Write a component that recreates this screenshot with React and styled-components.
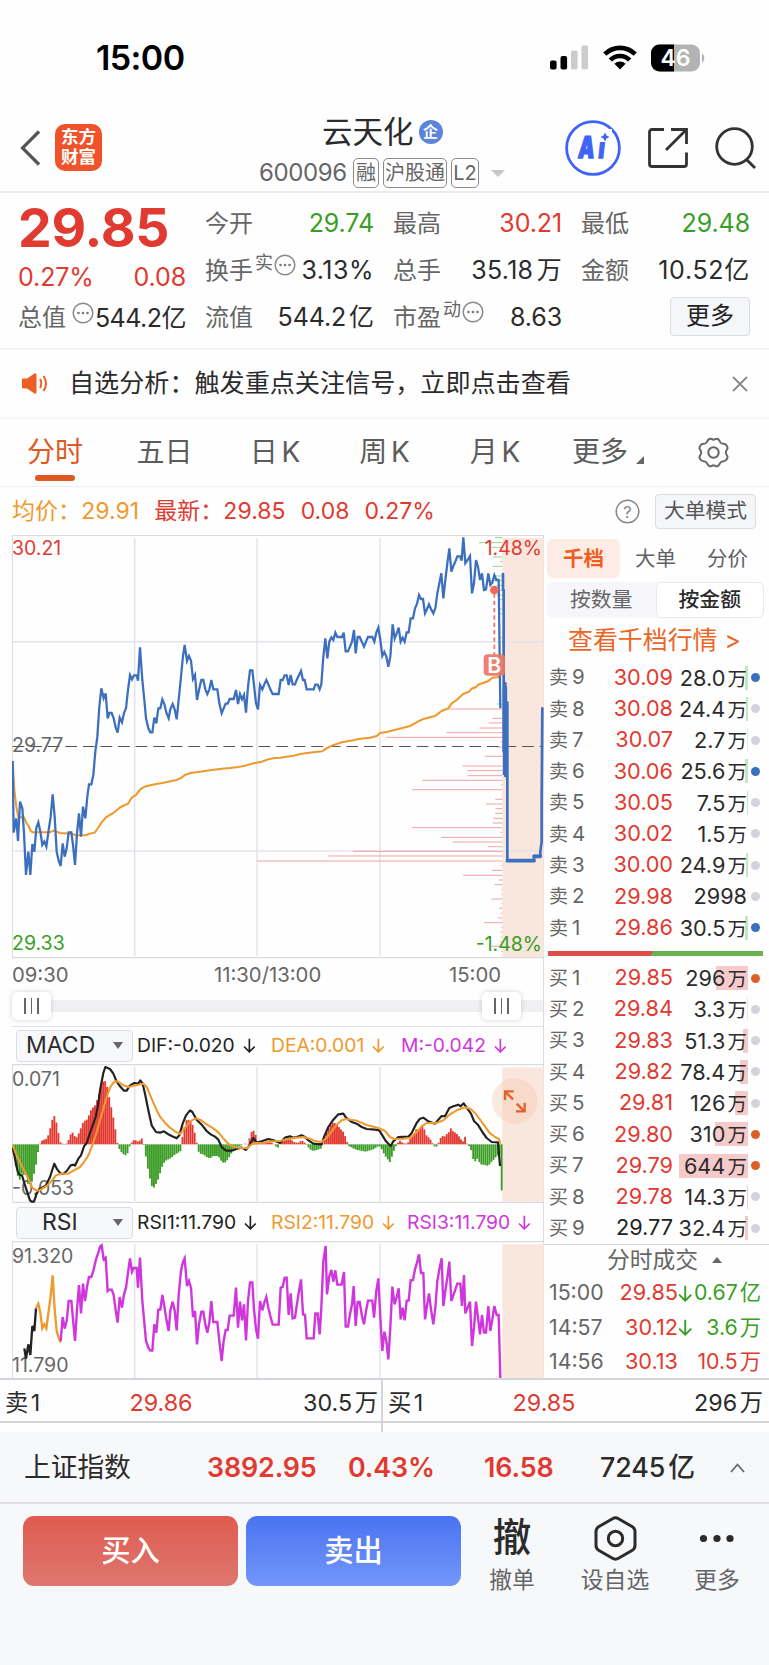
import React from 'react';
import styled, { createGlobalStyle } from 'styled-components';

/* Stock detail page: quote summary, intraday chart, order book and trade bar.
*/

const RED = '#e03a31';
const GREEN = '#3a9e26';
const ORANGE = '#ee9a2e';
const PURPLE = '#cf37dc';
const BLUE = '#3c6fbe';
const BLACK = '#222222';
const GREY = '#666666';

const GlobalStyle = createGlobalStyle`
  * {
    box-sizing: border-box;
  }
  body {
    margin: 0;
    background: #fefefe;
    color: #2b2b2b;
    font-family: Inter, 'Noto Sans CJK SC', sans-serif;
    font-size: 24px;
    line-height: 1;
    white-space: nowrap;
  }
  svg {
    display: block;
    flex: none;
  }
`;

const Page = styled.div`
  width: 769px;
  height: 1665px;
  overflow: hidden;
  display: flex;
  flex-direction: column;
  background: #fefefe;
`;

/* status bar + header */

const StatusBar = styled.div`
  height: 104px;
  padding: 11px 64px 0 96px;
  display: flex;
  align-items: center;
  flex: none;
`;

const Clock = styled.div`
  flex: 1;
  color: #000;
  padding-top: 1px;
  font-size: 34px;
  font-weight: 600;
  letter-spacing: -0.6px;
`;

const StatusIcons = styled.div`
  display: flex;
  align-items: center;
  gap: 14px;
`;

const Header = styled.div`
  height: 89px;
  flex: none;
  padding: 0 13px 0 20px;
  display: grid;
  grid-template-columns: 235px 1fr 202px;
  border-bottom: 2px solid #ebebeb;
`;

const HeaderSide = styled.div`
  display: flex;
  align-items: center;
  gap: ${(p) => p.$gap}px;
  justify-content: ${(p) => (p.$end ? 'flex-end' : 'flex-start')};
`;

const Logo = styled.div`
  width: 47px;
  height: 47px;
  border-radius: 10px;
  background: #f0522a;
  color: #fff;
  font-size: 17.5px;
  font-weight: 700;
  line-height: 20px;
  text-align: center;
  padding-top: 3px;
`;

const HeaderCenter = styled.div`
  padding-top: 11px;
`;

const Title = styled.div`
  height: 34px;
  display: flex;
  align-items: center;
  gap: 5px;
  padding-left: 67px;
  font-size: 30.5px;
`;

const Badge = styled.span`
  width: 24px;
  height: 24px;
  border-radius: 50%;
  background: #5b84dd;
  color: #fff;
  font-size: 15px;
  font-weight: 700;
  line-height: 23px;
  text-align: center;
`;

const CodeRow = styled.div`
  display: flex;
  align-items: center;
  gap: 4px;
  margin-top: 9px;
  padding-left: 4px;
  color: ${GREY};
`;

const Code = styled.span`
  width: 90px;
  font-size: 24px;
  letter-spacing: -0.4px;
`;

const Tag = styled.span`
  height: 30px;
  width: ${(p) => p.$w}px;
  border: 1.5px solid #8a8a8a;
  border-radius: 5px;
  line-height: 28px;
  text-align: center;
  font-size: 20px;
`;

const Caret = styled.span`
  width: 0;
  height: 0;
  margin-left: ${(p) => p.$gap || 0}px;
  border-left: ${(p) => p.$s || 7}px solid transparent;
  border-right: ${(p) => p.$s || 7}px solid transparent;
  ${(p) => (p.$up ? 'border-bottom' : 'border-top')}: ${(p) => p.$h || 7}px solid ${(p) => p.$c || '#c8c8c8'};
`;

/* quote summary */

const Summary = styled.div`
  height: 157px;
  flex: none;
  display: flex;
  gap: 19px;
  padding: 7px 19px 0 18px;
  border-bottom: 2px solid #f3f3f3;
`;

const PriceColumn = styled.div`
  width: 168px;
`;

const BigPrice = styled.div`
  height: 56px;
  line-height: 56px;
  font-size: 53.5px;
  font-weight: 650;
  letter-spacing: -0.2px;
  color: ${RED};
`;

const Cell = styled.div`
  height: ${(p) => p.$h || 47}px;
  display: flex;
  align-items: center;
  justify-content: space-between;
  color: ${(p) => p.$c || '#2b2b2b'};
  font-size: 25px;
  letter-spacing: ${(p) => p.$ls || -0.1}px;
  word-spacing: -4px;
`;

const CellLabel = styled.span`
  display: flex;
  align-items: center;
  color: ${GREY};
  font-size: 24px;
  letter-spacing: 0;
`;

const Sup = styled.span`
  font-size: 18px;
  margin: -15px 1px 0 2px;
`;

const InfoDot = styled.svg`
  margin-top: -11px;
  margin-left: ${(p) => p.$gap || 0}px;
`;

const StatGrid = styled.div`
  flex: 1;
  display: grid;
  grid-template-columns: repeat(3, 169px);
  grid-auto-rows: 47px;
  column-gap: 19px;
`;

const MoreButton = styled.button`
  width: 80px;
  height: 39px;
  margin: -3px 0 0 auto;
  padding: 0;
  border: 1.5px solid #dcdde4;
  border-radius: 4px;
  background: #f5f6fa;
  color: #222;
  font: inherit;
  font-size: 24px;
`;

/* notice */

const Notice = styled.div`
  height: 69px;
  flex: none;
  display: flex;
  align-items: center;
  padding: 0 21px 0 22px;
  border-bottom: 2px solid #f6f6f6;
`;

const NoticeText = styled.div`
  flex: 1;
  margin-left: 20px;
  font-size: 25.1px;
`;

/* tabs */

const Tabs = styled.div`
  height: 68px;
  flex: none;
  display: grid;
  grid-template-columns: 110px 109px 112px 107px 114px 112px 98px;
  border-bottom: 1.5px solid #f0f0f0;
`;

const Tab = styled.div`
  display: flex;
  flex-direction: column;
  align-items: center;
  padding-top: 18px;
  font-size: 28px;
  word-spacing: -4px;
  line-height: 30px;
  color: ${(p) => (p.$active ? '#dd5a22' : '#5c5c5c')};

  &::after {
    content: '';
    width: 40px;
    height: 6px;
    margin-top: 8px;
    border-radius: 3px;
    background: ${(p) => (p.$active ? '#dd5a22' : 'transparent')};
  }
`;

const TabLabel = styled.span`
  display: flex;
  align-items: flex-end;
  gap: 8px;
`;

const Legend = styled.div`
  height: 48px;
  flex: none;
  display: flex;
  align-items: center;
  gap: 15px;
  padding: 0 13px 0 12px;
  font-size: 23px;
  letter-spacing: 0.05px;
  color: ${RED};
`;

const LegendItem = styled.span`
  flex: ${(p) => (p.$grow ? 1 : 'none')};
  color: ${(p) => p.$c || RED};
`;

const ModeButton = styled.button`
  width: 101px;
  height: 35px;
  padding: 0;
  border: 1.5px solid #dcdde4;
  border-radius: 4px;
  background: #f5f6fa;
  color: #555;
  font: inherit;
  font-size: 20.8px;
`;

/* charts */

const Main = styled.div`
  height: 843px;
  flex: none;
  display: flex;
  overflow: hidden;
`;

const Charts = styled.div`
  width: 544px;
  flex: none;
  padding-left: 12px;
  border-right: 1px solid #dcdce3;
`;

const TimeAxis = styled.div`
  height: 30px;
  padding: 2px 42px 0 0;
  display: grid;
  grid-template-columns: 202px 1fr auto;
  align-items: center;
  font-size: 20.3px;
  color: ${GREY};
`;

const Slider = styled.div`
  height: 38px;
  margin-bottom: -1px;
  padding: 0 22px 3px 0;
  display: flex;
  align-items: center;
  justify-content: space-between;
  background: linear-gradient(#f0f0f3, #f0f0f3) no-repeat 20px 11px / 511px 12px;
  border-bottom: 1.5px solid #e0e0e6;
`;

const Handle = styled.div`
  width: 39px;
  height: 28px;
  border-radius: 5px;
  background: #fff;
  box-shadow: 0 0 5px rgba(0, 0, 0, 0.18);
  display: flex;
  align-items: center;
  justify-content: center;
  gap: 4.4px;

  & > i {
    width: 1.8px;
    height: 16px;
    background: #666;
  }
`;

const IndicatorRow = styled.div`
  height: 38px;
  display: flex;
  align-items: center;
  padding: 1px 0 0 4px;
  font-size: 19.3px;
`;

const IndicatorSelect = styled.div`
  width: 117px;
  height: 32px;
  flex: none;
  margin-right: 4px;
  border: 1.5px solid #dcdde4;
  border-radius: 4px;
  background: #f7f8fb;
  display: flex;
  align-items: center;
  justify-content: space-between;
  padding: 0 9px 0 ${(p) => p.$pad}px;
  font-size: 23px;
`;

const IndicatorValue = styled.span`
  display: flex;
  align-items: center;
  gap: 8px;
  width: ${(p) => p.$w}px;
  color: ${(p) => p.$c};
`;

/* order book */

const Book = styled.div`
  flex: 1;
`;

const BookTabs = styled.div`
  display: grid;
  grid-template-columns: 73px 70px 74px;
  height: 43px;
  padding: 4px 0 0 3px;
`;

const BookTab = styled.div`
  height: 39px;
  border-radius: 6px;
  line-height: 39px;
  text-align: ${(p) => (p.$active ? 'center' : 'right')};
  padding-right: ${(p) => p.$pad || 0}px;
  font-size: 20.5px;
  font-weight: ${(p) => (p.$active ? 700 : 400)};
  color: ${(p) => (p.$active ? '#ee5d22' : '#606060')};
  background: ${(p) => (p.$active ? '#fdece3' : 'transparent')};
`;

const Segment = styled.div`
  display: flex;
  height: 36px;
  margin: 4px 5px 0 3px;
  border-radius: 6px;
  background: #f6f6fa;
`;

const SegmentItem = styled.div`
  flex: 1;
  border-radius: 6px;
  text-align: center;
  line-height: 34px;
  font-size: 20.8px;
  border: 1.5px solid ${(p) => (p.$active ? '#e9e9ee' : 'transparent')};
  background: ${(p) => (p.$active ? '#fff' : 'transparent')};
  color: ${(p) => (p.$active ? '#2b2b2b' : '#666')};
  font-weight: ${(p) => (p.$active ? 500 : 400)};
`;

const DepthLink = styled.div`
  height: 44px;
  line-height: 44px;
  text-align: center;
  padding-right: 4px;
  font-size: 24.9px;
  color: #ea6527;
`;

const BookRow = styled.div`
  height: 31.27px;
  display: flex;
  align-items: center;
  padding-left: 5px;
  font-size: 21.7px;
`;

const Side = styled.span`
  width: 43px;
  font-size: 20.5px;
  color: ${GREY};

  & > b {
    font-weight: 400;
    font-size: 19px;
    margin-right: 4px;
  }
`;

const Price = styled.span`
  width: 81px;
  text-align: right;
  color: ${(p) => p.$c || RED};
`;

const Amount = styled.span`
  width: 75px;
  height: 24px;
  line-height: 24px;
  padding-right: 1px;
  text-align: right;
  word-spacing: -4px;
  background: linear-gradient(${(p) => p.$c}, ${(p) => p.$c}) no-repeat right / ${(p) => p.$bar}px 100%;
`;

const Unit = styled.small`
  font-size: 19.5px;
`;

const Dot = styled.i`
  width: 9px;
  height: 9px;
  margin-left: 3px;
  border-radius: 50%;
  background: ${(p) => p.$c};
`;

const Ratio = styled.div`
  height: 5px;
  margin: 8px 6px 6px 4px;
  background: linear-gradient(120deg, #dc4e49 48%, #69b24c 48.5%);
`;

const TradesTitle = styled.div`
  height: 32px;
  border-top: 1.5px solid #d6d6dd;
  display: flex;
  align-items: center;
  justify-content: center;
  padding-left: 21px;
  padding-right: 5px;
  font-size: 22.8px;
  color: ${GREY};
`;

const Trade = styled.div`
  height: 34.5px;
  display: flex;
  align-items: center;
  padding-left: 5px;
  font-size: 21.3px;
  color: ${(p) => p.$c};
`;

const TradeTime = styled.span`
  width: 60px;
  font-size: 21.3px;
  color: ${GREY};
`;

const TradePrice = styled.span`
  width: 69px;
  font-size: 21.7px;
  text-align: right;
  color: ${RED};
`;

const TradeAmount = styled.span`
  flex: 1;
  text-align: right;
  padding-right: 8px;
  word-spacing: -4px;
`;

/* bottom part */

const BestQuotes = styled.div`
  height: 54px;
  flex: none;
  display: grid;
  grid-template-columns: 383px 1fr;
`;

const BestQuote = styled.div`
  border-top: 2px solid #d4d4db;
  border-right: ${(p) => (p.$split ? '2px solid #d4d4db' : 'none')};
  display: grid;
  grid-template-columns: 90px 132px 1fr;
  align-items: center;
  height: 54px;
  padding: 0 ${(p) => (p.$split ? 3 : 6)}px 7px 5px;
  font-size: 23.3px;
  word-spacing: -4px;
  background: linear-gradient(#d4d4db, #d4d4db) no-repeat 0 41px / 100% 2px;

  & > :nth-child(2) {
    text-align: center;
    color: ${RED};
  }
  & > :nth-child(3) {
    text-align: right;
  }
`;

const IndexBar = styled.div`
  height: 72px;
  flex: none;
  display: grid;
  grid-template-columns: 183px 141px 136px 116px 130px 1fr;
  align-items: center;
  padding: 1px 24px 0 24px;
  border-bottom: 2px solid #dfdfe3;
  background: #f7f8fa;
  font-size: 26.8px;
  font-weight: 600;
  letter-spacing: -0.1px;
  word-spacing: -4px;
  color: ${RED};
`;

const IndexName = styled.span`
  font-weight: 400;
  font-size: 26.8px;
  color: #2b2b2b;
`;

const IndexVolume = styled.span`
  color: #2b2b2b;
  font-weight: 500;
`;

const ActionBar = styled.div`
  flex: 1;
  display: flex;
  align-items: flex-start;
  padding: 12px 0 0 23px;
  background: #f7f8fa;
`;

const TradeButton = styled.button`
  width: 215px;
  height: 70px;
  margin-right: 8px;
  padding: 0;
  border: none;
  border-radius: 11px;
  background: ${(p) => (p.$sell ? 'linear-gradient(#4a73f0, #7396fb)' : 'linear-gradient(#e05b50, #dd776f)')};
  color: #fff;
  font: inherit;
  font-size: 29.3px;
  font-weight: 500;
`;

const Action = styled.div`
  width: ${(p) => p.$w}px;
  display: flex;
  flex-direction: column;
  align-items: center;
  font-size: 22.8px;
  color: ${GREY};
`;

const ActionIcon = styled.div`
  height: 50px;
  line-height: 43px;
  margin-bottom: 3px;
  font-size: 38.5px;
  font-weight: 500;
  color: #2b2b2b;
`;

/* chart data, one unit is a third of a pixel */

const PRICE =
  '38,693 41,908 46,880 49,865 54,933 60,815 67,835 72,910 78,1035 85,965 91,1035 97,942 103,965 109,893 115,877 121,905 127,945 133,935 139,950 146,900 152,860 158,793 164,860 170,965 176,992 182,1008 188,940 194,980 200,955 206,907 214,907 219,945 225,1005 231,910 237,850 243,920 249,830 256,865 262,800 267,763 274,763 280,735 286,665 292,620 298,530 304,475 311,505 317,490 323,565 328,549 335,549 341,565 347,592 353,608 359,563 366,577 372,549 378,535 384,480 390,435 396,448 402,436 410,436 414,452 420,352 427,450 433,510 438,565 445,595 451,607 457,607 463,563 469,580 475,535 481,535 487,508 493,522 499,548 506,565 511,538 518,522 524,538 530,568 536,510 543,440 549,378 554,345 561,393 567,378 573,392 579,447 585,435 591,510 597,480 604,450 610,450 616,478 622,492 628,478 634,450 640,478 652,478 658,520 665,550 671,535 677,521 683,521 689,507 701,507 708,480 714,522 720,492 726,508 732,495 738,548 744,470 750,421 757,421 762,465 768,520 774,538 780,465 787,478 793,463 799,450 805,463 811,478 818,492 836,492 842,450 848,450 854,436 860,436 866,465 872,435 878,463 885,463 890,450 903,423 909,450 914,450 920,478 941,478 946,464 953,464 959,478 964,463 970,380 976,325 982,385 988,335 994,322 1000,330 1006,308 1012,321 1026,321 1031,308 1037,364 1044,364 1050,350 1056,335 1062,300 1067,370 1073,321 1079,321 1092,350 1098,335 1104,321 1117,321 1123,335 1129,308 1135,293 1141,330 1147,378 1153,366 1159,380 1165,410 1171,380 1178,283 1184,325 1190,310 1196,293 1202,335 1208,323 1214,335 1220,307 1226,307 1232,265 1239,265 1245,235 1251,222 1257,195 1263,207 1269,207 1275,250 1281,237 1287,223 1293,237 1300,250 1306,235 1312,190 1318,160 1324,130 1330,205 1336,150 1342,100 1348,55 1354,125 1360,108 1366,95 1372,79 1380,79 1385,92 1390,22 1396,100 1403,90 1410,78 1416,190 1422,160 1428,90 1434,110 1440,150 1446,130 1452,180 1458,178 1465,130 1471,165 1477,158 1483,135 1489,150 1496,150 1501,535';

const AVERAGE =
  '38,693 43,780 49,830 55,862 72,862 80,880 86,888 92,903 98,907 150,907 160,902 172,906 180,909 215,911 228,916 258,916 265,912 284,908 292,897 305,877 318,862 340,849 362,831 384,821 395,803 408,795 421,778 430,772 440,768 465,763 490,758 515,753 530,750 545,743 555,735 572,729 600,725 630,721 665,716 690,714 715,711 735,707 760,700 785,695 805,688 820,685 840,683 880,677 905,671 940,667 967,664 980,655 995,647 1025,637 1060,631 1075,627 1110,623 1130,618 1140,609 1160,606 1195,597 1230,588 1255,574 1270,567 1305,558 1325,543 1345,535 1355,520 1370,510 1390,492 1407,485 1415,476 1428,471 1435,464 1465,453 1477,443 1498,441';

// [left end, y] of every chip line, all end at the auction zone
const ASKS = [
  [1485, 23], [1437, 38], [1475, 52], [1480, 81], [1500, 95], [1478, 109], [1482, 138], [1467, 152],
  [1490, 166], [1490, 181], [1490, 195], [1500, 209], [1500, 237], [1500, 251], [1496, 323], [1491, 522],
];
const BIDS = [
  [1348, 537], [1478, 565], [1466, 579], [1438, 594], [1340, 608], [1159, 622], [1502, 636], [1490, 651],
  [1455, 679], [1505, 693], [1387, 708], [1402, 722], [1403, 737], [1267, 751], [1503, 765], [1237, 779],
  [1505, 793], [1486, 808], [1458, 822], [1487, 836], [1485, 850], [1480, 865], [1478, 879], [1237, 893],
  [1502, 907], [1324, 922], [1358, 936], [1465, 950], [1060, 964], [985, 978], [771, 993], [1503, 1007],
  [1475, 1021], [1389, 1036], [1497, 1050], [1484, 1064], [1504, 1078], [1504, 1093], [1474, 1107], [1504, 1121],
  [1497, 1135], [1502, 1150], [1493, 1164], [1452, 1178], [1504, 1192], [1501, 1206], [1504, 1221], [1500, 1235],
  [1475, 1249], [1504, 1263],
];

const DIF =
  '38,262 44,290 52,330 58,343 66,345 72,365 80,390 90,420 95,424 102,424 110,400 118,385 125,383 138,375 150,350 163,310 172,328 182,340 190,341 200,332 212,315 222,313 225,316 235,295 243,285 252,258 260,248 270,218 278,195 287,170 294,135 300,90 310,38 316,20 330,26 340,40 350,64 360,78 372,91 380,91 390,75 403,68 415,70 421,60 428,70 435,100 445,150 455,195 468,215 480,217 492,213 505,222 515,227 530,234 538,225 548,190 558,165 570,150 577,155 590,178 605,193 620,212 632,222 645,229 655,238 665,260 678,271 695,271 715,264 725,262 738,269 750,252 760,233 770,247 785,243 805,236 820,240 840,248 855,232 870,228 880,232 890,230 905,225 915,230 925,240 940,250 965,252 972,230 985,200 1000,178 1015,162 1030,160 1038,172 1055,185 1070,190 1085,200 1100,206 1125,208 1138,210 1147,225 1158,243 1172,257 1180,243 1195,230 1225,229 1235,218 1250,188 1260,175 1270,172 1285,183 1305,190 1315,178 1325,167 1335,168 1348,143 1360,138 1375,133 1382,138 1391,129 1402,145 1413,160 1422,182 1435,195 1447,215 1460,233 1475,245 1494,246 1500,317';

const DEA =
  '38,255 50,285 62,310 75,335 85,355 95,380 105,388 115,391 125,386 140,377 155,362 168,345 185,340 205,340 222,330 240,320 250,308 265,285 277,255 290,215 300,180 310,145 320,110 332,78 345,62 356,65 370,75 385,80 400,76 415,73 430,70 440,80 455,115 470,150 482,172 495,187 510,202 525,213 540,221 548,212 560,196 575,180 588,174 600,178 620,192 640,204 655,216 670,234 685,251 700,259 715,262 740,264 755,252 768,248 790,247 815,243 840,242 860,237 885,232 910,230 925,234 945,242 965,245 980,232 995,213 1010,193 1025,180 1038,176 1070,181 1100,194 1135,203 1155,212 1170,230 1182,236 1210,235 1230,232 1250,215 1265,198 1280,188 1310,188 1330,180 1350,162 1370,150 1395,141 1412,146 1425,158 1440,178 1455,198 1468,217 1485,230 1497,236 1501,250';

// key heights of the MACD histogram, the minutes between are interpolated
const MACD_KEYS = [
  [40, -15], [46, -60], [52, -90], [58, -112], [64, -85], [70, -95], [76, -80], [82, -118], [94, -120], [100, -95],
  [106, -75], [112, -35], [118, -3], [124, 10], [142, 18], [148, 38], [154, 60], [160, 88], [166, 82], [172, 50],
  [178, 20], [182, 3], [198, 0], [204, 8], [210, 26], [216, 38], [222, 28], [228, 18], [234, 28], [240, 42],
  [250, 68], [262, 75], [274, 105], [286, 118], [292, 135], [300, 160], [305, 180], [313, 195], [320, 180], [328, 140],
  [336, 100], [344, 60], [350, 15], [354, -5], [360, -18], [368, -28], [376, -33], [384, -25], [389, -5], [394, 4],
  [400, 12], [410, 12], [417, 4], [423, 24], [430, 5], [435, -20], [441, -60], [448, -95], [454, -122], [460, -133],
  [466, -122], [472, -112], [478, -95], [484, -72], [495, -50], [515, -40], [525, -30], [541, -22], [545, 10], [552, 45],
  [558, 72], [564, 74], [570, 72], [576, 65], [582, 42], [588, 20], [592, -10], [598, -28], [610, -30], [620, -38],
  [630, -42], [640, -35], [655, -35], [665, -52], [672, -57], [680, -50], [690, -35], [700, -15], [715, -8], [736, 3],
  [740, -5], [746, 5], [752, 35], [760, 42], [767, 28], [773, 6], [790, 3], [812, 6], [820, 3], [826, -5],
  [835, -10], [842, 3], [855, 15], [868, 17], [876, 12], [885, 5], [895, 5], [905, 12], [914, 5], [922, -5],
  [930, -15], [940, -20], [966, -12], [970, 12], [980, 35], [990, 55], [1000, 66], [1010, 60], [1020, 48], [1032, 35],
  [1040, 10], [1046, -5], [1060, -12], [1072, -17], [1098, -22], [1122, -14], [1135, -5], [1142, -8], [1150, -25],
  [1158, -38], [1170, -54], [1178, -30], [1185, -10], [1190, -2], [1198, 12], [1210, 3], [1222, 2], [1232, 18],
  [1242, 28], [1250, 48], [1257, 42], [1265, 56], [1273, 45], [1280, 25], [1288, 20], [1295, 8], [1302, -5], [1308, -9],
  [1314, 0], [1318, 10], [1326, 28], [1332, 20], [1338, 30], [1345, 32], [1351, 50], [1358, 40], [1366, 35], [1374, 28],
  [1383, 15], [1390, 8], [1394, 28], [1399, 5], [1405, -3], [1412, -10], [1418, -40], [1424, -55], [1430, -40],
  [1442, -60], [1455, -62], [1465, -65], [1472, -55], [1482, -45], [1490, -35], [1499, -30], [1503, -138],
];

const RSI_SHORT = '73,862 78,893 85,850 91,882 97,795 103,810 108,742';
const RSI_MID = '108,742 115,728 121,755 127,802 133,790 139,802 146,750 152,705 158,643 164,745 170,810 176,830 182,845';
const RSI_LONG =
  '182,840 188,768 194,803 200,780 206,720 214,720 219,775 225,840 231,745 237,672 243,757 249,668 255,720 262,672 267,648 274,648 280,630 288,595 295,575 300,557 305,553 311,595 317,590 323,690 328,686 335,686 341,702 347,748 353,785 359,708 366,740 372,700 378,680 384,635 390,592 396,632 401,621 410,621 414,680 420,590 427,720 433,785 438,840 445,860 451,869 457,869 463,790 469,815 475,746 481,746 487,702 493,735 499,775 506,810 511,748 518,722 524,748 530,808 536,702 543,630 549,603 554,592 561,675 567,660 573,680 579,768 585,750 591,850 597,790 604,752 610,752 616,790 622,815 628,785 634,720 640,783 652,783 658,840 665,900 671,840 677,807 683,807 689,764 701,764 708,680 714,800 720,722 726,778 732,730 738,838 744,720 750,664 757,664 762,745 768,805 774,833 780,720 787,748 793,725 799,708 805,740 811,765 818,791 836,791 842,680 848,678 854,650 860,650 866,762 872,697 878,772 885,770 890,735 897,690 903,655 909,760 915,762 920,832 941,832 946,757 953,757 959,820 964,740 970,600 977,555 981,700 988,645 994,627 1000,662 1006,628 1012,671 1025,671 1032,633 1037,797 1044,797 1050,760 1056,730 1061,675 1067,795 1073,723 1079,723 1086,765 1092,790 1098,750 1104,719 1117,719 1122,770 1129,690 1135,652 1141,770 1147,870 1153,812 1159,840 1165,895 1171,800 1177,677 1184,730 1190,708 1196,682 1202,775 1208,740 1214,778 1220,719 1226,719 1232,658 1239,657 1245,625 1251,605 1257,580 1263,636 1270,636 1275,775 1281,735 1287,697 1293,745 1300,790 1306,740 1312,660 1318,625 1325,592 1330,735 1336,690 1342,650 1348,602 1354,720 1360,703 1372,668 1381,668 1386,735 1392,642 1396,757 1403,740 1410,722 1416,855 1422,800 1428,722 1434,770 1440,820 1446,762 1452,815 1458,815 1465,735 1471,810 1477,775 1483,735 1490,762 1496,762 1501,952';

const SELLS = [
  [9, '30.09', '28.0', '万', 3, '#3c6fbe'],
  [8, '30.08', '24.4', '万', 2.5],
  [7, '30.07', '2.7', '万', 0.6],
  [6, '30.06', '25.6', '万', 3, '#3c6fbe'],
  [5, '30.05', '7.5', '万', 1.3],
  [4, '30.02', '1.5', '万', 0.4],
  [3, '30.00', '24.9', '万', 2.5],
  [2, '29.98', '2998', '', 0],
  [1, '29.86', '30.5', '万', 3.5, '#3c6fbe'],
];

const BUYS = [
  [1, '29.85', '296', '万', 32, '#dc6026'],
  [2, '29.84', '3.3', '万', 0.6],
  [3, '29.83', '51.3', '万', 5.5],
  [4, '29.82', '78.4', '万', 8.5],
  [5, '29.81', '126', '万', 13.5],
  [6, '29.80', '310', '万', 33.5, '#dc6026'],
  [7, '29.79', '644', '万', 69, '#dc6026'],
  [8, '29.78', '14.3', '万', 1.4],
  [9, '29.77', '32.4', '万', 3.4],
];

const macdBars = () => {
  const bars = [];
  let k = 0;
  for (let x = 41; x < 1506; x += 6.1) {
    while (k < MACD_KEYS.length - 2 && MACD_KEYS[k + 1][0] < x) k += 1;
    const [x0, h0] = MACD_KEYS[k];
    const [x1, h1] = MACD_KEYS[k + 1];
    const t = Math.min(1, Math.max(0, (x - x0) / (x1 - x0)));
    bars.push([x, h0 + (h1 - h0) * t]);
  }
  return bars;
};

const Label = ({ x, y, c = GREY, end, children }) => (
  <text x={x} y={y} fill={c} fontSize="58.500" textAnchor={end ? 'end' : 'start'}>
    {children}
  </text>
);

const Grid = ({ top, bottom }) => (
  <g>
    <rect x="1507" y={top + 8} width="124" height={bottom - top - 10} fill="#f9e6dc" />
    <path d={`M404 ${top + 8}V${bottom - 4}M771 ${top + 8}V${bottom - 4}M1139.5 ${top + 8}V${bottom - 4}`} stroke="#e3e3ec" strokeWidth="4.500" />
    <path d={`M37.5 ${top}V${bottom}`} stroke="#dcdce5" strokeWidth="3" />
    <path d={`M36 ${top}H1632M36 ${bottom}H1632`} stroke="#dadae1" strokeWidth="3.500" />
  </g>
);

const PriceChart = () => (
  <svg width="532" height="424" viewBox="36 15 1596 1272">
    <Grid top={16} bottom={1283} />
    <path d="M38 335.500H1630M38 963H1630" stroke="#e3e3ec" strokeWidth="4.500" />
    <g stroke="#8fd08a" strokeWidth="2.800">
      {ASKS.map(([x, y]) => (
        <path key={y} d={`M${x} ${y}H1507`} />
      ))}
    </g>
    <g stroke="#f09c9c" strokeWidth="2.800">
      {BIDS.map(([x, y]) => (
        <path key={y} d={`M${x} ${y}H1507`} />
      ))}
    </g>
    <path d="M38 649.500H1630" stroke="#555" strokeWidth="3.500" strokeDasharray="35 17.700" />
    <polyline points={AVERAGE} fill="none" stroke={ORANGE} strokeWidth="6.200" />
    <polyline points={PRICE} fill="none" stroke={BLUE} strokeWidth="6.800" />
    <path
      d="M1509 132V180M1511 180V664M1516 460V738M1522 518V992H1602V978H1621V965L1625 935V820L1627 535"
      fill="none"
      stroke={BLUE}
      strokeWidth="8"
      strokeLinejoin="round"
      strokeLinecap="round"
    />
    <path d="M1515 470V735" stroke={BLUE} strokeWidth="13" />
    <path d="M1522 992H1602M1602 979H1621" stroke={BLUE} strokeWidth="11" strokeLinecap="round" />
    <path d="M1483 190V374" stroke="#f0796c" strokeWidth="5.500" strokeDasharray="13 9" />
    <circle cx="1483" cy="180" r="13" fill="#ee6a5c" />
    <rect x="1451" y="373" width="64" height="64" rx="12" fill="#ee7466" fillOpacity="0.92" />
    <text x="1483" y="428" fill="#fff" fontSize="64" fontWeight="600" textAnchor="middle">B</text>
    <Label x={36} y={74} c={RED}>30.21</Label>
    <Label x={36} y={667}>29.77</Label>
    <Label x={36} y={1261} c={GREEN}>29.33</Label>
    <Label x={1626} y={74} c={RED} end>1.48%</Label>
    <Label x={1626} y={1262} c={GREEN} end>-1.48%</Label>
  </svg>
);

const MacdChart = () => (
  <svg width="532" height="139" viewBox="36 11 1596 417">
    <Grid top={13} bottom={426} />
    {macdBars().map(([x, h]) => (
      <rect key={x} x={x - 2.8} y={h > 0 ? 252 - h : 252} width="5.600" height={Math.abs(h)} fill={h > 0 ? '#e2382f' : '#3c9d26'} />
    ))}
    <Label x={36} y={78}>0.071</Label>
    <Label x={36} y={405}>-0.053</Label>
    <polyline points={DIF} fill="none" stroke={BLACK} strokeWidth="6.500" strokeLinejoin="round" />
    <polyline points={DEA} fill="none" stroke={ORANGE} strokeWidth="6.200" strokeLinejoin="round" />
    <circle cx="1544" cy="122" r="68" fill="#f3c2a6" fillOpacity="0.35" />
    <path d="M1515 119V93H1541M1515 93L1539 117M1550 130L1574 154M1574 127V153H1548" fill="none" stroke="#e0632b" strokeWidth="7" />
  </svg>
);

const RsiChart = () => (
  <svg width="532" height="138" viewBox="36 540 1596 414">
    <Grid top={542} bottom={956} />
    <Label x={36} y={605}>91.320</Label>
    <Label x={36} y={933}>11.790</Label>
    <polyline points={RSI_SHORT} fill="none" stroke={BLACK} strokeWidth="7" />
    <polyline points={RSI_MID} fill="none" stroke={ORANGE} strokeWidth="7" />
    <polyline points={RSI_LONG} fill="none" stroke={PURPLE} strokeWidth="7.200" />
  </svg>
);

const Arrow = ({ size = 15 }) => (
  <svg width={size * 0.85} height={size} viewBox="0 0 13 15" fill="none" stroke="currentColor" strokeWidth="1.700">
    <path d="M6.500 0.500V14M1 8.500L6.500 14L12 8.500" />
  </svg>
);

const More = ({ gap }) => (
  <InfoDot $gap={gap} width="22" height="22" viewBox="0 0 22 22">
    <circle cx="11" cy="11" r="9.800" fill="none" stroke="#8a8a8a" strokeWidth="1.500" />
    <g fill="#777">
      <circle cx="6.500" cy="11" r="1.300" />
      <circle cx="11" cy="11" r="1.300" />
      <circle cx="15.500" cy="11" r="1.300" />
    </g>
  </InfoDot>
);

const LevelRow = ({ side, row, tint }) => {
  const [level, price, amount, unit, bar, dot] = row;
  return (
    <BookRow>
      <Side><b>{side}</b>{level}</Side>
      <Price $c={price === '29.77' ? BLACK : RED}>{price}</Price>
      <Amount $c={tint} $bar={bar}>{amount}{unit && ' '}<Unit>{unit}</Unit></Amount>
      <Dot $c={dot || '#d3d4da'} />
    </BookRow>
  );
};

export default function App() {
  return (
    <>
      <GlobalStyle />
      <Page>
        <StatusBar>
          <Clock>15:00</Clock>
          <StatusIcons>
            <svg width="39" height="25" viewBox="0 0 39 25">
              <rect x="0" y="15.500" width="6.600" height="9" rx="2" fill="#000" />
              <rect x="10.500" y="11" width="6.600" height="13.500" rx="2" fill="#000" />
              <rect x="21" y="5.500" width="6.600" height="19" rx="2" fill="#ccc" />
              <rect x="31.500" y="0.500" width="6.600" height="24" rx="2" fill="#ccc" />
            </svg>
            <svg width="34" height="25" viewBox="0 0 34 25">
              <g fill="none" stroke="#000" strokeWidth="4.600">
                <path d="M1.800 9.200A21.500 21.500 0 0 1 32.200 9.200" />
                <path d="M7.300 15A13.700 13.700 0 0 1 26.700 15" />
              </g>
              <path d="M17 24.500L11.400 18.800A8 8 0 0 1 22.600 18.800Z" fill="#000" />
            </svg>
            <svg width="54" height="28" viewBox="0 0 54 28">
              <defs>
                <clipPath id="charge">
                  <rect width="23" height="28" />
                </clipPath>
              </defs>
              <rect y="0.500" width="49" height="27" rx="8.500" fill="#b3b3b3" />
              <rect y="0.500" width="49" height="27" rx="8.500" fill="#000" clipPath="url(#charge)" />
              <path d="M51 9.500C54 11 54 17 51 18.500Z" fill="#b3b3b3" />
              <text x="24.500" y="22" fill="#fff" fontSize="23" fontWeight="600" textAnchor="middle">46</text>
            </svg>
          </StatusIcons>
        </StatusBar>

        <Header>
          <HeaderSide $gap={14}>
            <svg width="21" height="36" viewBox="0 0 21 36" fill="none" stroke="#555" strokeWidth="3.200">
              <path d="M19 1.500L2.500 18L19 34.500" />
            </svg>
            <Logo>东方<br />财富</Logo>
          </HeaderSide>
          <HeaderCenter>
            <Title>云天化<Badge>企</Badge></Title>
            <CodeRow>
              <Code>600096</Code>
              <Tag $w={26}>融</Tag>
              <Tag $w={64}>沪股通</Tag>
              <Tag $w={28}>L2</Tag>
              <Caret $gap={8} />
            </CodeRow>
          </HeaderCenter>
          <HeaderSide $gap={27} $end>
            <svg width="56" height="56" viewBox="0 0 56 56">
              <circle cx="28" cy="28" r="26.400" fill="#fff" stroke="#3f63f6" strokeWidth="2.800" />
              <g fill="#3f63f6" stroke="#3f63f6" strokeWidth="1.500" strokeLinejoin="round" transform="translate(12.500 37.800) skewX(-6) scale(0.68 1)">
                <text fontSize="30" fontWeight="900">
                  A<tspan dx="6">i</tspan>
                </text>
              </g>
              <rect x="32" y="9" width="15" height="13" fill="#fff" />
              <path d="M40 12.500L41.500 15.500L44.500 17L41.500 18.500L40 21.500L38.500 18.500L35.500 17L38.500 15.500Z" fill="#3f63f6" />
            </svg>
            <svg width="40" height="40" viewBox="0 0 40 40" fill="none" stroke="#333" strokeWidth="2.800">
              <path d="M16 1.500H4A2.500 2.500 0 0 0 1.500 4V36A2.500 2.500 0 0 0 4 38.500H36A2.500 2.500 0 0 0 38.500 36V24.500" />
              <path d="M23 1.500H38.500V16M38.500 1.500L18 22" />
            </svg>
            <svg width="41" height="42" viewBox="0 0 41 42" fill="none" stroke="#333" strokeWidth="2.800">
              <circle cx="19.500" cy="19.500" r="17.800" />
              <path d="M31.500 32.500L40 41" />
            </svg>
          </HeaderSide>
        </Header>

        <Summary>
          <PriceColumn>
            <BigPrice>29.85</BigPrice>
            <Cell $c={RED} $h={43}><span>0.27%</span><span>0.08</span></Cell>
            <Cell $h={38} $ls={-0.5}><CellLabel>总值<More gap={6} /></CellLabel>544.2亿</Cell>
          </PriceColumn>
          <StatGrid>
            <Cell $c={GREEN}><CellLabel>今开</CellLabel>29.74</Cell>
            <Cell $c={RED}><CellLabel>最高</CellLabel>30.21</Cell>
            <Cell $c={GREEN}><CellLabel>最低</CellLabel>29.48</Cell>
            <Cell $ls={0.5}><CellLabel>换手<Sup>实</Sup><More /></CellLabel>3.13%</Cell>
            <Cell $ls={0.3}><CellLabel>总手</CellLabel>35.18 万</Cell>
            <Cell $ls={0.7}><CellLabel>金额</CellLabel>10.52亿</Cell>
            <Cell><CellLabel>流值</CellLabel>544.2 亿</Cell>
            <Cell><CellLabel>市盈<Sup>动</Sup><More /></CellLabel>8.63</Cell>
            <Cell><MoreButton>更多</MoreButton></Cell>
          </StatGrid>
        </Summary>

        <Notice>
          <svg width="27" height="23" viewBox="0 0 27 23">
            <path d="M1 6.500H5L12.500 1.500Q14.500 0.500 14.500 3V20Q14.500 22.500 12.500 21.500L5 16.500H1Q0 16.500 0 15.500V7.500Q0 6.500 1 6.500Z" fill="#ee5f25" />
            <path d="M18 7Q20.500 11.500 18 16M21.500 4Q26.500 11.500 21.500 19" fill="none" stroke="#ee5f25" strokeWidth="2" />
          </svg>
          <NoticeText>自选分析：触发重点关注信号，立即点击查看</NoticeText>
          <svg width="16" height="16" viewBox="0 0 16 16" stroke="#888" strokeWidth="1.800">
            <path d="M1 1L15 15M15 1L1 15" />
          </svg>
        </Notice>

        <Tabs>
          <Tab $active>分时</Tab>
          <Tab>五日</Tab>
          <Tab>日 K</Tab>
          <Tab>周 K</Tab>
          <Tab>月 K</Tab>
          <Tab>
            <TabLabel>更多
              <svg width="8" height="12" viewBox="0 0 8 12"><path d="M8 1V9H0Z" fill="#666" /></svg>
            </TabLabel>
          </Tab>
          <Tab>
            <svg width="33" height="31" viewBox="0 0 33 31" fill="none" stroke="#666" strokeWidth="2">
              <path d="M11.500 2.500Q13 1 15 2.200Q16.500 3.200 18 2.200Q20 1 21.500 2.500L23.500 5.500Q24.500 6.800 26.500 6.800Q29 7 30 9.200Q31 11 30 12.500Q28.800 14 28.800 15.500Q28.800 17 30 18.500Q31 20 30 21.800Q29 24 26.500 24.200Q24.500 24.200 23.500 25.500L21.500 28.500Q20 30 18 28.800Q16.500 27.800 15 28.800Q13 30 11.500 28.500L9.500 25.500Q8.500 24.200 6.500 24.200Q4 24 3 21.800Q2 20 3 18.500Q4.200 17 4.200 15.500Q4.200 14 3 12.500Q2 11 3 9.200Q4 7 6.500 6.800Q8.500 6.800 9.500 5.500Z" />
              <circle cx="16.500" cy="15.500" r="5.200" />
            </svg>
          </Tab>
        </Tabs>

        <Legend>
          <LegendItem $c={ORANGE}>均价：29.91</LegendItem>
          <LegendItem>最新：29.85</LegendItem>
          <LegendItem>0.08</LegendItem>
          <LegendItem $grow>0.27%</LegendItem>
          <svg width="25" height="25" viewBox="0 0 25 25">
            <circle cx="12.500" cy="12.500" r="11.300" fill="none" stroke="#888" strokeWidth="1.500" />
            <text x="12.500" y="18.500" fill="#888" fontSize="16.500" textAnchor="middle">?</text>
          </svg>
          <ModeButton>大单模式</ModeButton>
        </Legend>

        <Main>
          <Charts>
            <PriceChart />
            <TimeAxis>
              <span>09:30</span>
              <span>11:30/13:00</span>
              <span>15:00</span>
            </TimeAxis>
            <Slider>
              <Handle><i /><i /><i /></Handle>
              <Handle><i /><i /><i /></Handle>
            </Slider>
            <IndicatorRow>
              <IndicatorSelect $pad={9}>MACD<Caret $s={5} $c="#666" /></IndicatorSelect>
              <IndicatorValue $w={134} $c={BLACK}>DIF:-0.020 <Arrow /></IndicatorValue>
              <IndicatorValue $w={130} $c={ORANGE}>DEA:0.001 <Arrow /></IndicatorValue>
              <IndicatorValue $w={120} $c={PURPLE}>M:-0.042 <Arrow /></IndicatorValue>
            </IndicatorRow>
            <MacdChart />
            <IndicatorRow>
              <IndicatorSelect $pad={25}>RSI<Caret $s={5} $c="#666" /></IndicatorSelect>
              <IndicatorValue $w={134} $c={BLACK}>RSI1:11.790 <Arrow /></IndicatorValue>
              <IndicatorValue $w={136} $c={ORANGE}>RSI2:11.790 <Arrow /></IndicatorValue>
              <IndicatorValue $w={130} $c={PURPLE}>RSI3:11.790 <Arrow /></IndicatorValue>
            </IndicatorRow>
            <RsiChart />
          </Charts>

          <Book>
            <BookTabs>
              <BookTab $active>千档</BookTab>
              <BookTab $pad={14}>大单</BookTab>
              <BookTab $pad={16}>分价</BookTab>
            </BookTabs>
            <Segment>
              <SegmentItem>按数量</SegmentItem>
              <SegmentItem $active>按金额</SegmentItem>
            </Segment>
            <DepthLink>查看千档行情 &gt;</DepthLink>
            {SELLS.map((row) => (
              <LevelRow key={row[0]} side="卖" row={row} tint="#c5e7bf" />
            ))}
            <Ratio />
            {BUYS.map((row) => (
              <LevelRow key={row[0]} side="买" row={row} tint="#f6caca" />
            ))}
            <TradesTitle>分时成交<Caret $up $gap={14} $s={5.5} $h={6} $c="#666" /></TradesTitle>
            <Trade $c={GREEN}>
              <TradeTime>15:00</TradeTime><TradePrice>29.85</TradePrice><Arrow size={17} /><TradeAmount>0.67 亿</TradeAmount>
            </Trade>
            <Trade $c={GREEN}>
              <TradeTime>14:57</TradeTime><TradePrice>30.12</TradePrice><Arrow size={17} /><TradeAmount>3.6 万</TradeAmount>
            </Trade>
            <Trade $c={RED}>
              <TradeTime>14:56</TradeTime><TradePrice>30.13</TradePrice><TradeAmount>10.5 万</TradeAmount>
            </Trade>
          </Book>
        </Main>

        <BestQuotes>
          <BestQuote $split>
            <span>卖 1</span><span>29.86</span><span>30.5 万</span>
          </BestQuote>
          <BestQuote>
            <span>买 1</span><span>29.85</span><span>296 万</span>
          </BestQuote>
        </BestQuotes>

        <IndexBar>
          <IndexName>上证指数</IndexName>
          <span>3892.95</span>
          <span>0.43%</span>
          <span>16.58</span>
          <IndexVolume>7245 亿</IndexVolume>
          <svg width="15" height="10" viewBox="0 0 15 10" fill="none" stroke="#666" strokeWidth="1.800">
            <path d="M1 9L7.500 1.500L14 9" />
          </svg>
        </IndexBar>

        <ActionBar>
          <TradeButton>买入</TradeButton>
          <TradeButton $sell>卖出</TradeButton>
          <Action $w={86}>
            <ActionIcon>撤</ActionIcon>撤单
          </Action>
          <Action $w={120}>
            <ActionIcon>
              <svg width="43" height="45" viewBox="0 0 43 45" fill="none" stroke="#2b2b2b" strokeWidth="3">
                <path d="M18.500 2.700Q21.500 1 24.500 2.700L38 10.500Q41 12.300 41 15.500V29.500Q41 32.700 38 34.500L24.500 42.300Q21.500 44 18.500 42.300L5 34.500Q2 32.700 2 29.500V15.500Q2 12.300 5 10.500Z" />
                <circle cx="21.500" cy="22.500" r="7.200" />
              </svg>
            </ActionIcon>
            设自选
          </Action>
          <Action $w={84}>
            <ActionIcon>
              <svg width="36" height="45" viewBox="0 0 36 45" fill="#2b2b2b">
                <circle cx="4.500" cy="22.500" r="3.600" />
                <circle cx="18" cy="22.500" r="3.600" />
                <circle cx="31" cy="22.500" r="3.600" />
              </svg>
            </ActionIcon>
            更多
          </Action>
        </ActionBar>
      </Page>
    </>
  );
}
